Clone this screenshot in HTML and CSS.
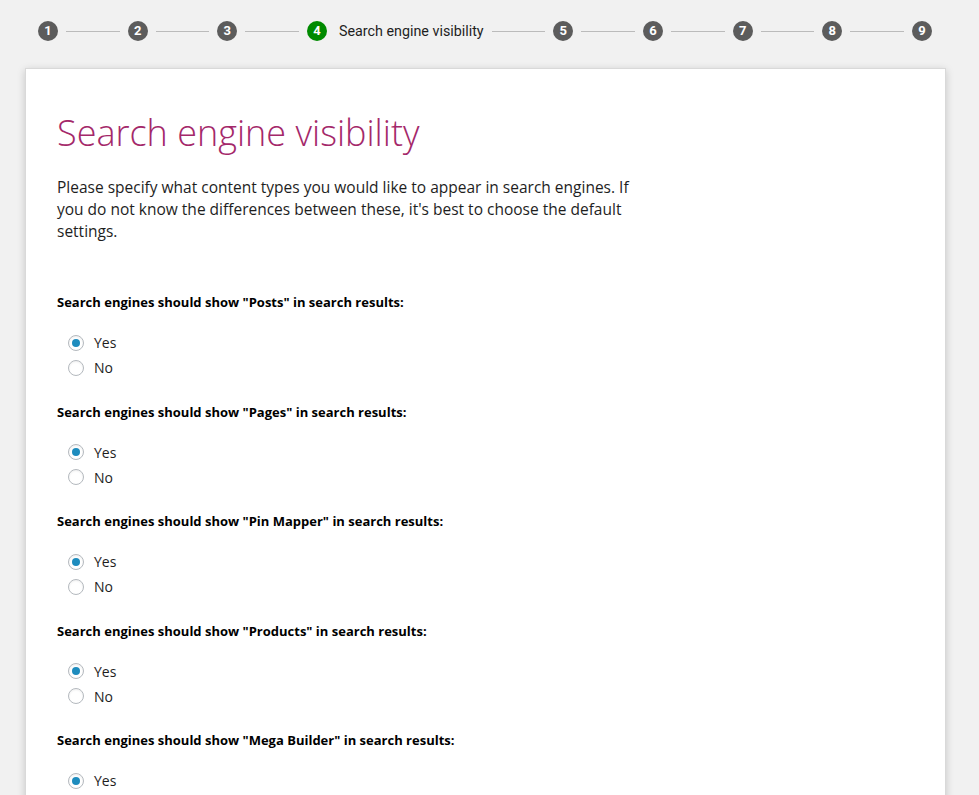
FILE: index.html
```html
<!DOCTYPE html>
<html lang="en">
<head>
<meta charset="utf-8">
<title>Search engine visibility</title>
<link rel="stylesheet" href="styles.css">
</head>
<body>
<div class="page">
  <ol class="stepper">
    <li class="step">1</li><li class="line"></li>
    <li class="step">2</li><li class="line"></li>
    <li class="step">3</li><li class="line"></li>
    <li class="step current">4</li><li class="step-label">Search engine visibility</li><li class="line"></li>
    <li class="step">5</li><li class="line"></li>
    <li class="step">6</li><li class="line"></li>
    <li class="step">7</li><li class="line"></li>
    <li class="step">8</li><li class="line"></li>
    <li class="step">9</li>
  </ol>
  <main class="card">
    <h1 class="title">Search engine visibility</h1>
    <p class="intro">Please specify what content types you would like to appear in search engines. If you do not know the differences between these, it's best to choose the default settings.</p>

    <fieldset class="question">
      <legend class="question-label">Search engines should show "Posts" in search results:</legend>
      <label class="option"><input type="radio" name="posts" checked><span>Yes</span></label>
      <label class="option"><input type="radio" name="posts"><span>No</span></label>
    </fieldset>

    <fieldset class="question">
      <legend class="question-label">Search engines should show "Pages" in search results:</legend>
      <label class="option"><input type="radio" name="pages" checked><span>Yes</span></label>
      <label class="option"><input type="radio" name="pages"><span>No</span></label>
    </fieldset>

    <fieldset class="question">
      <legend class="question-label">Search engines should show "Pin Mapper" in search results:</legend>
      <label class="option"><input type="radio" name="pin" checked><span>Yes</span></label>
      <label class="option"><input type="radio" name="pin"><span>No</span></label>
    </fieldset>

    <fieldset class="question">
      <legend class="question-label">Search engines should show "Products" in search results:</legend>
      <label class="option"><input type="radio" name="products" checked><span>Yes</span></label>
      <label class="option"><input type="radio" name="products"><span>No</span></label>
    </fieldset>

    <fieldset class="question">
      <legend class="question-label">Search engines should show "Mega Builder" in search results:</legend>
      <label class="option"><input type="radio" name="mega" checked><span>Yes</span></label>
      <label class="option"><input type="radio" name="mega"><span>No</span></label>
    </fieldset>
  </main>
</div>
</body>
</html>
```

FILE: styles.css
```css
html, body {
  margin: 0;
  padding: 0;
  background: #f1f1f1;
}
body {
  font-family: "Open Sans", "Noto Sans", sans-serif;
  color: #1e1e1e;
  overflow: hidden;
}
.page {
  width: 921px;
  margin-left: 25px;
}
.stepper {
  list-style: none;
  margin: 0;
  padding: 21px 14px 0 13px;
  display: flex;
  align-items: center;
  gap: 8px;
  height: 20px;
  font-family: Roboto, "Liberation Sans", sans-serif;
}
.step {
  flex: none;
  width: 20px;
  height: 20px;
  border-radius: 50%;
  background: #5c5c5c;
  color: #fff;
  font-size: 13px;
  font-weight: 700;
  line-height: 20px;
  text-align: center;
}
.step.current {
  background: #008a00;
}
.step-label {
  flex: none;
  font-size: 14.3px;
  color: #1e1e1e;
  margin-left: 4px;
}
.line {
  flex: 1;
  height: 1px;
  background: #bbbbbb;
}
.card {
  margin-top: 27px;
  background: #fff;
  border: 1px solid #d9d9d9;
  box-shadow: 0 2px 8px rgba(0, 0, 0, 0.18);
  padding: 40px 31px 60px;
  min-height: 800px;
}
.title {
  margin: 0;
  font-weight: 300;
  font-size: 36px;
  line-height: 48px;
  color: #a4286a;
}
.intro {
  margin: 19px 0 0;
  max-width: 575px;
  font-size: 15.5px;
  line-height: 22px;
  color: #1e1e1e;
}
.question {
  border: 0;
  margin: 0;
  padding: 0;
  display: flex;
  flex-direction: column;
  margin-top: 21.5px;
}
.question:first-of-type {
  margin-top: 50px;
}
.question-label {
  padding: 0;
  font-size: 13px;
  font-weight: 700;
  line-height: 20px;
  color: #000;
  float: left;
  width: 100%;
  margin-bottom: 18px;
}
.option {
  display: flex;
  align-items: center;
  height: 25px;
  font-size: 14px;
  color: #1e1e1e;
  padding-left: 11px;
}
.option input {
  appearance: none;
  -webkit-appearance: none;
  margin: 0 10px 0 0;
  width: 16px;
  height: 16px;
  border: 1px solid #b4b9be;
  border-radius: 50%;
  background: #fff;
  box-shadow: inset 0 1px 2px rgba(0, 0, 0, 0.07);
  display: grid;
  place-items: center;
}
.option input:checked::before {
  content: "";
  width: 8px;
  height: 8px;
  border-radius: 50%;
  background: #1e8cbe;
}
```
